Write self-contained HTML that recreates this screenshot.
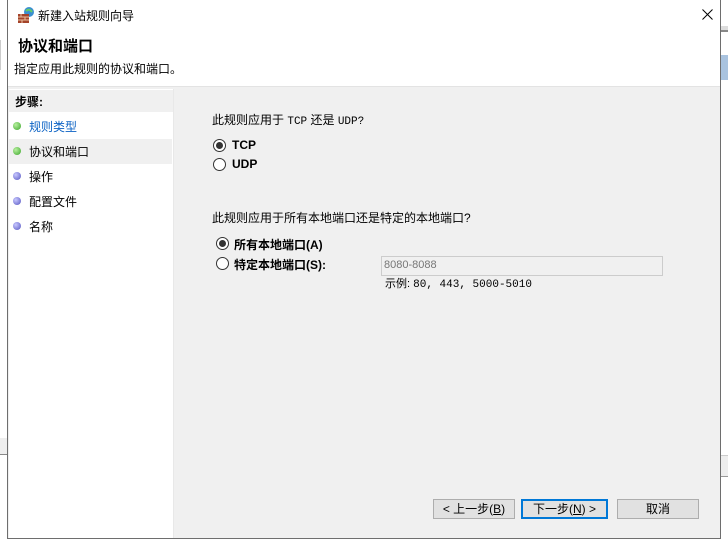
<!DOCTYPE html>
<html><head><meta charset="utf-8"><style>
*{margin:0;padding:0;box-sizing:border-box}
body{width:728px;height:546px;background:#fff;position:relative;overflow:hidden;font-family:"Liberation Sans","Noto Sans CJK SC",sans-serif;font-size:12px;color:#000}
.a{position:absolute}
.dlg{left:7px;top:0;width:714px;height:539px;border:1px solid #6e6e6e;border-top:none;background:#f0f0f0}
.t{white-space:nowrap}
.dot{width:8px;height:8px;border-radius:50%}
.g{background:radial-gradient(circle at 35% 35%,#b8f0a0,#3aa52a)}
.b{background:radial-gradient(circle at 35% 35%,#c8c8ff,#5555c0)}
.rad{width:13px;height:13px;border:1px solid #333;border-radius:50%;background:#fff}
.rad.on::after{content:"";position:absolute;left:2px;top:2px;width:7px;height:7px;border-radius:50%;background:#333}
.btn{height:20px;border:1px solid #adadad;background:#e1e1e1;text-align:center;line-height:18px;font-size:12px}
</style></head><body>
<div class="a" style="left:0;top:0;width:7px;height:546px;background:#fff"></div>
<div class="a" style="left:0;top:40px;width:7px;height:30px;background:#fff;border-left:1px solid #ccc"></div>
<div class="a" style="left:0;top:438px;width:7px;height:17px;background:#eee;border-bottom:1px solid #888"></div>
<div class="a" style="left:721px;top:26px;width:7px;height:6px;background:#ddd;border-bottom:2px solid #888"></div>
<div class="a" style="left:721px;top:55px;width:7px;height:25px;background:#a9c3df"></div>
<div class="a" style="left:721px;top:455px;width:7px;height:22px;background:#eee;border-top:1px solid #ccc;border-bottom:1px solid #999"></div>
<div class="a dlg">
 <div class="a" style="left:0;top:0;width:712px;height:87px;background:#fff;border-bottom:1px solid #e3e3e3"></div>
 <svg class="a" style="left:9px;top:6px" width="18" height="18" viewBox="0 0 18 18"><circle cx="12" cy="6" r="5" fill="#3a8fd0"/><path d="M9 5q3-3 6 1" stroke="#6c6" stroke-width="2" fill="none"/><rect x="1" y="8" width="11" height="9" fill="#a4432a"/><path d="M1 11h11M1 14h11M4 8v3M8 11v3M5 14v3" stroke="#e8c0a0" stroke-width="1"/></svg>
 <div class="a t" style="left:30px;top:7px;font-size:12px">新建入站规则向导</div>
 <svg class="a" style="left:694px;top:9px" width="11" height="11" viewBox="0 0 11 11"><path d="M0.5 0.5L10.5 10.5M10.5 0.5L0.5 10.5" stroke="#000" stroke-width="1"/></svg>
 <div class="a t" style="left:10px;top:35px;font-size:15px;font-weight:bold">协议和端口</div>
 <div class="a t" style="left:6px;top:60px">指定应用此规则的协议和端口。</div>
 <div class="a" style="left:1px;top:89px;width:165px;height:449px;background:#fff;border-right:1px solid #e8e8e8"></div>
 <div class="a" style="left:1px;top:90px;width:164px;height:22px;background:#f0f0f0"></div>
 <div class="a t" style="left:7px;top:93px;font-weight:bold">步骤:</div>
 <div class="a" style="left:1px;top:139px;width:163px;height:25px;background:#f0f0f0"></div>
 <div class="a dot g" style="left:5px;top:122px"></div><div class="a t" style="left:21px;top:118px;color:#0b62c4">规则类型</div>
 <div class="a dot g" style="left:5px;top:147px"></div><div class="a t" style="left:21px;top:143px">协议和端口</div>
 <div class="a dot b" style="left:5px;top:172px"></div><div class="a t" style="left:21px;top:168px">操作</div>
 <div class="a dot b" style="left:5px;top:197px"></div><div class="a t" style="left:21px;top:193px">配置文件</div>
 <div class="a dot b" style="left:5px;top:222px"></div><div class="a t" style="left:21px;top:218px">名称</div>
 <div class="a t" style="left:204px;top:111px">此规则应用于 <span style="font-family:'Liberation Mono',monospace;font-size:11px">TCP</span> 还是 <span style="font-family:'Liberation Mono',monospace;font-size:11px">UDP?</span></div>
 <div class="a rad on" style="left:205px;top:139px"></div><div class="a t" style="left:224px;top:138px;font-weight:bold">TCP</div>
 <div class="a rad" style="left:205px;top:158px"></div><div class="a t" style="left:224px;top:157px;font-weight:bold">UDP</div>
 <div class="a t" style="left:204px;top:209px">此规则应用于所有本地端口还是特定的本地端口?</div>
 <div class="a rad on" style="left:208px;top:237px"></div><div class="a t" style="left:226px;top:236px;font-weight:bold">所有本地端口(A)</div>
 <div class="a rad" style="left:208px;top:257px"></div><div class="a t" style="left:226px;top:256px;font-weight:bold">特定本地端口(S):</div>
 <div class="a" style="left:373px;top:256px;width:282px;height:20px;border:1px solid #ccc;background:#f0f0f0;color:#777;line-height:17px;padding-left:2px;font-size:11px">8080-8088</div>
 <div class="a t" style="left:377px;top:275px;font-size:11px">示例: <span style="font-family:'Liberation Mono',monospace">80, 443, 5000-5010</span></div>
 <div class="a btn" style="left:425px;top:499px;width:82px">&lt; 上一步(<u>B</u>)</div>
 <div class="a btn" style="left:513px;top:499px;width:87px;border:2px solid #0078d7;line-height:16px">下一步(<u>N</u>) &gt;</div>
 <div class="a btn" style="left:609px;top:499px;width:82px">取消</div>
</div>
</body></html>
